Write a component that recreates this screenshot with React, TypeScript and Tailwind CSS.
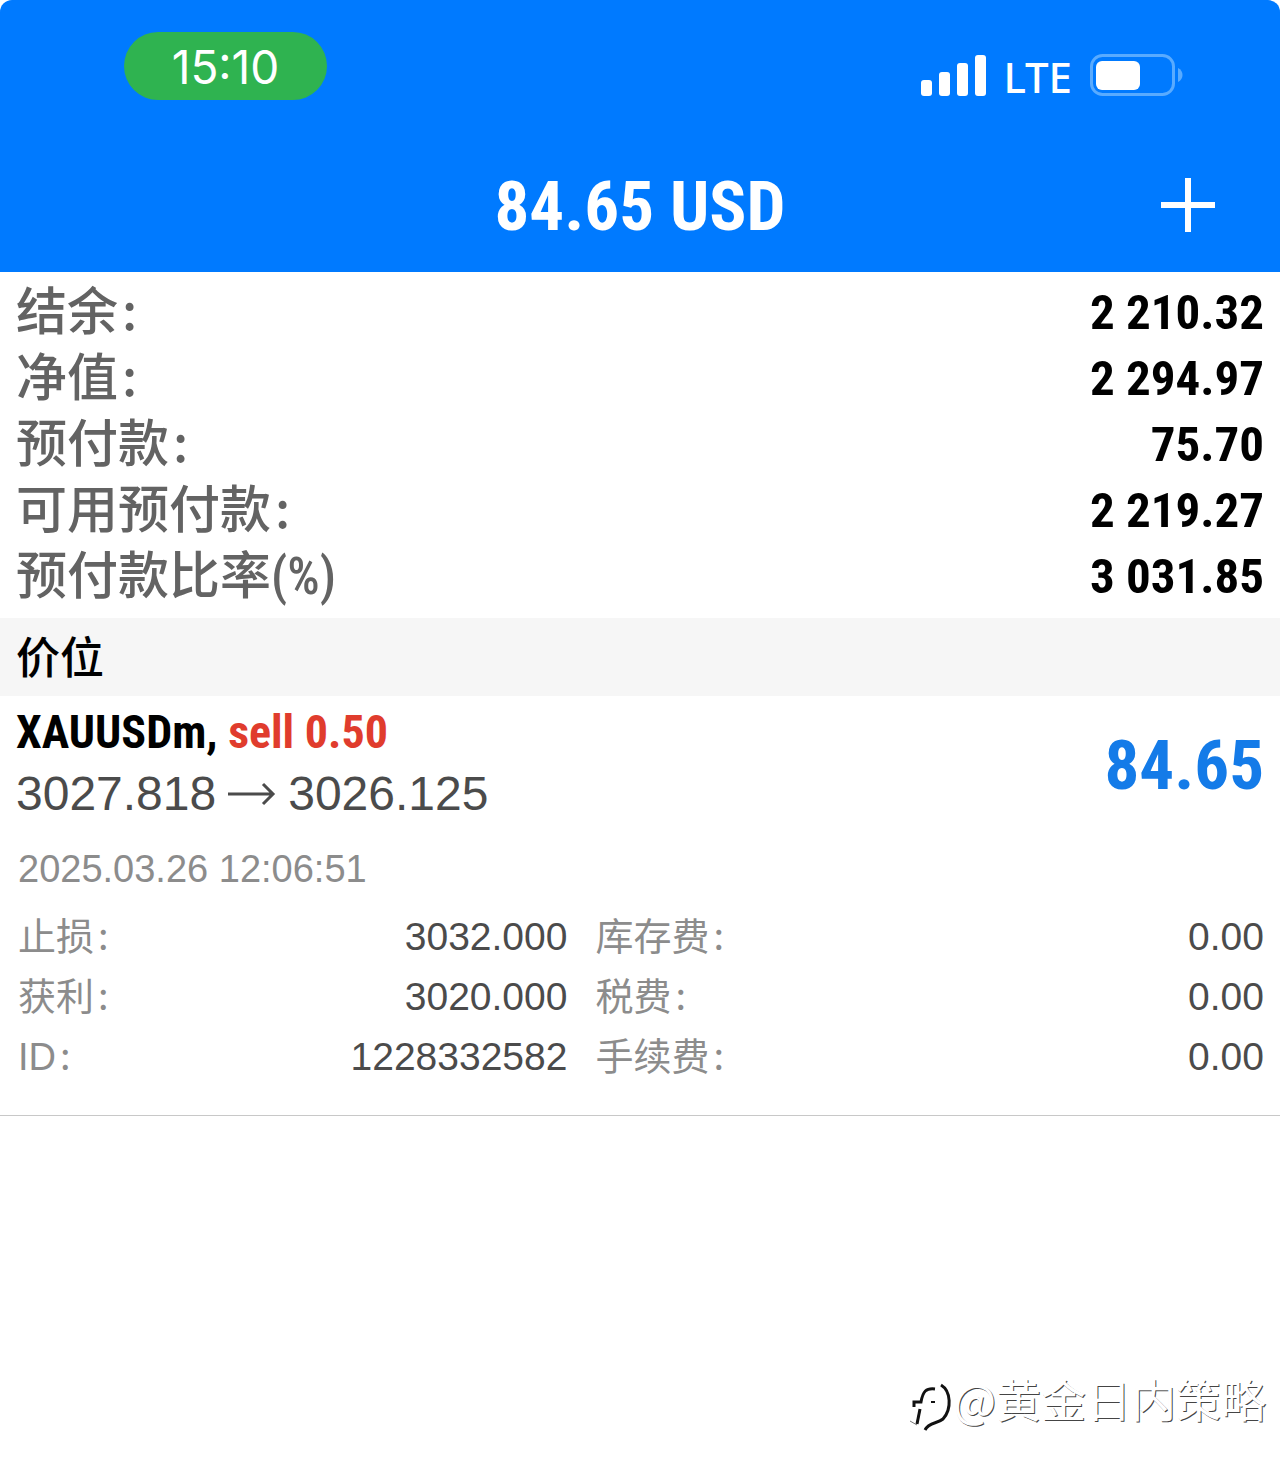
import React from 'react';

interface Row {
  label: string;
  value: string;
  colon?: boolean;
}

const summary: Row[] = [
  { label: '结余', value: '2 210.32' },
  { label: '净值', value: '2 294.97' },
  { label: '预付款', value: '75.70' },
  { label: '可用预付款', value: '2 219.27' },
  { label: '预付款比率(%)', value: '3 031.85', colon: false },
];

const orderDetails: Row[] = [
  { label: '止损', value: '3032.000' },
  { label: '获利', value: '3020.000' },
  { label: 'ID', value: '1228332582' },
];

const feeDetails: Row[] = [
  { label: '库存费', value: '0.00' },
  { label: '税费', value: '0.00' },
  { label: '手续费', value: '0.00' },
];

function StatusBar() {
  return (
    <div className="flex items-start justify-between pt-8 pr-[97px] pl-[124px]">
      <div className="flex h-[68px] w-[203px] items-center justify-center rounded-full bg-[#2fb350] pt-[2px] font-['Inter',sans-serif] text-[46px] text-white">
        15:10
      </div>
      <div className="flex items-start pt-[22px]">
        <svg className="h-[42px] w-[66px]" viewBox="0 0 66 42" fill="white">
          <rect x="0" y="26" width="11" height="16" rx="3" />
          <rect x="18" y="18" width="11" height="24" rx="3" />
          <rect x="36" y="9" width="11" height="33" rx="3" />
          <rect x="54" y="1" width="11" height="41" rx="3" />
        </svg>
        <span className="ml-4 font-['Noto_Sans',sans-serif] text-[42px] leading-[46px] font-medium text-white">
          LTE
        </span>
        <svg className="ml-[18px] h-[42px] w-[93px]" viewBox="0 0 93 42" fill="none">
          <rect x="1.5" y="1.5" width="82" height="39" rx="11" stroke="#59abff" strokeWidth="3" />
          <rect x="6" y="7" width="44" height="29" rx="6" fill="white" />
          <path d="M88 14c6 3 6 11 0 14z" fill="#59abff" />
        </svg>
      </div>
    </div>
  );
}

function Label({ text, colon = true }: { text: string; colon?: boolean }) {
  return (
    <>
      {text}
      {colon && <span className="ml-1 font-['Noto_Sans_CJK_SC',sans-serif] leading-none">:</span>}
    </>
  );
}

function SummaryRow({ label, value, colon }: Row) {
  return (
    <div className="flex h-[66px] items-center justify-between">
      <dt className="font-['Roboto_Condensed','Noto_Sans_CJK_SC',sans-serif] text-[51px] leading-[66px] font-medium text-[#636363]">
        <Label text={label} colon={colon} />
      </dt>
      <dd className="font-['Roboto_Condensed','Liberation_Sans',sans-serif] text-[49px] leading-[66px] font-bold">
        {value}
      </dd>
    </div>
  );
}

function DetailRow({ label, value }: Row) {
  return (
    <div className="flex h-[60px] items-center justify-between">
      <dt className="text-[38px] leading-[56px] text-[#8c8c8c]">
        <Label text={label} />
      </dt>
      <dd className="text-[39px] leading-[56px] text-[#4b4b4b]">{value}</dd>
    </div>
  );
}

function Watermark() {
  return (
    <div className="mt-auto flex items-center justify-end pr-[14px] pb-11 text-white">
      <svg className="h-[66px] w-[46px]" viewBox="0 0 46 66" fill="none" stroke="#111" strokeWidth="3">
        <path d="M28 23C19 22 16 25 14 36H7V41" />
        <path d="M13 43 10 58" />
        <path d="M3 55 10 59" strokeWidth="1" stroke="#777" />
        <path d="M34 19C44 25 45 43 36 53 30 58 22 56 18 64" />
        <path d="M24 36h4" strokeWidth="2" />
      </svg>
      <span className="font-['Noto_Sans_CJK_SC',sans-serif] text-[45px] leading-[60px] [text-shadow:1px_1px_0_#444]">
        @黄金日内策略
      </span>
    </div>
  );
}

export default function App() {
  return (
    <div className="flex min-h-screen flex-col bg-white font-['Liberation_Sans','Noto_Sans_CJK_SC',sans-serif] text-black">
      <header className="rounded-t-xl bg-[#007aff] pb-[27px]">
        <StatusBar />
        <div className="grid grid-cols-[1fr_auto_1fr] items-center px-16 pt-[65px] text-white">
          <h1 className="col-start-2 pt-1 font-['Roboto_Condensed','Liberation_Sans',sans-serif] text-[69px] leading-[76px] font-bold">
            84.65 USD
          </h1>
          <button type="button" aria-label="Add" className="justify-self-end">
            <svg className="size-[56px]" viewBox="0 0 56 56" stroke="white" strokeWidth="6">
              <path d="M28 1v54M1 28h54" />
            </svg>
          </button>
        </div>
      </header>

      <dl className="px-4 pt-2 pb-2">
        {summary.map((row) => (
          <SummaryRow key={row.label} {...row} />
        ))}
      </dl>

      <h2 className="bg-[#f6f6f6] px-4 pt-1 text-[44px] leading-[74px] font-medium">价位</h2>

      <section className="border-b border-[#c8c8c8] px-4 pb-7">
        <div className="flex justify-between">
          <div>
            <h3 className="pt-2 font-['Roboto_Condensed','Liberation_Sans',sans-serif] text-[46px] leading-[56px] font-bold">
              XAUUSDm, <span className="text-[#e03c2d]">sell 0.50</span>
            </h3>
            <p className="flex items-center text-[48px] leading-[68px] text-[#4b4b4b]">
              3027.818
              <svg className="mx-3 h-6 w-12" viewBox="0 0 48 24" fill="none" stroke="currentColor" strokeWidth="3">
                <path d="M0 12h45M35 2l10 10-10 10" />
              </svg>
              3026.125
            </p>
          </div>
          <p className="pt-[30px] font-['Roboto_Condensed','Liberation_Sans',sans-serif] text-[69px] leading-[80px] font-bold text-[#147be8]">
            84.65
          </p>
        </div>
        <p className="pt-[11px] pl-[2px] text-[38px] leading-[60px] text-[#8c8c8c]">2025.03.26 12:06:51</p>
        <div className="grid grid-cols-[549fr_668fr] gap-7 pt-2 pl-[2px]">
          <dl>
            {orderDetails.map((row) => (
              <DetailRow key={row.label} {...row} />
            ))}
          </dl>
          <dl>
            {feeDetails.map((row) => (
              <DetailRow key={row.label} {...row} />
            ))}
          </dl>
        </div>
      </section>

      <Watermark />
    </div>
  );
}
